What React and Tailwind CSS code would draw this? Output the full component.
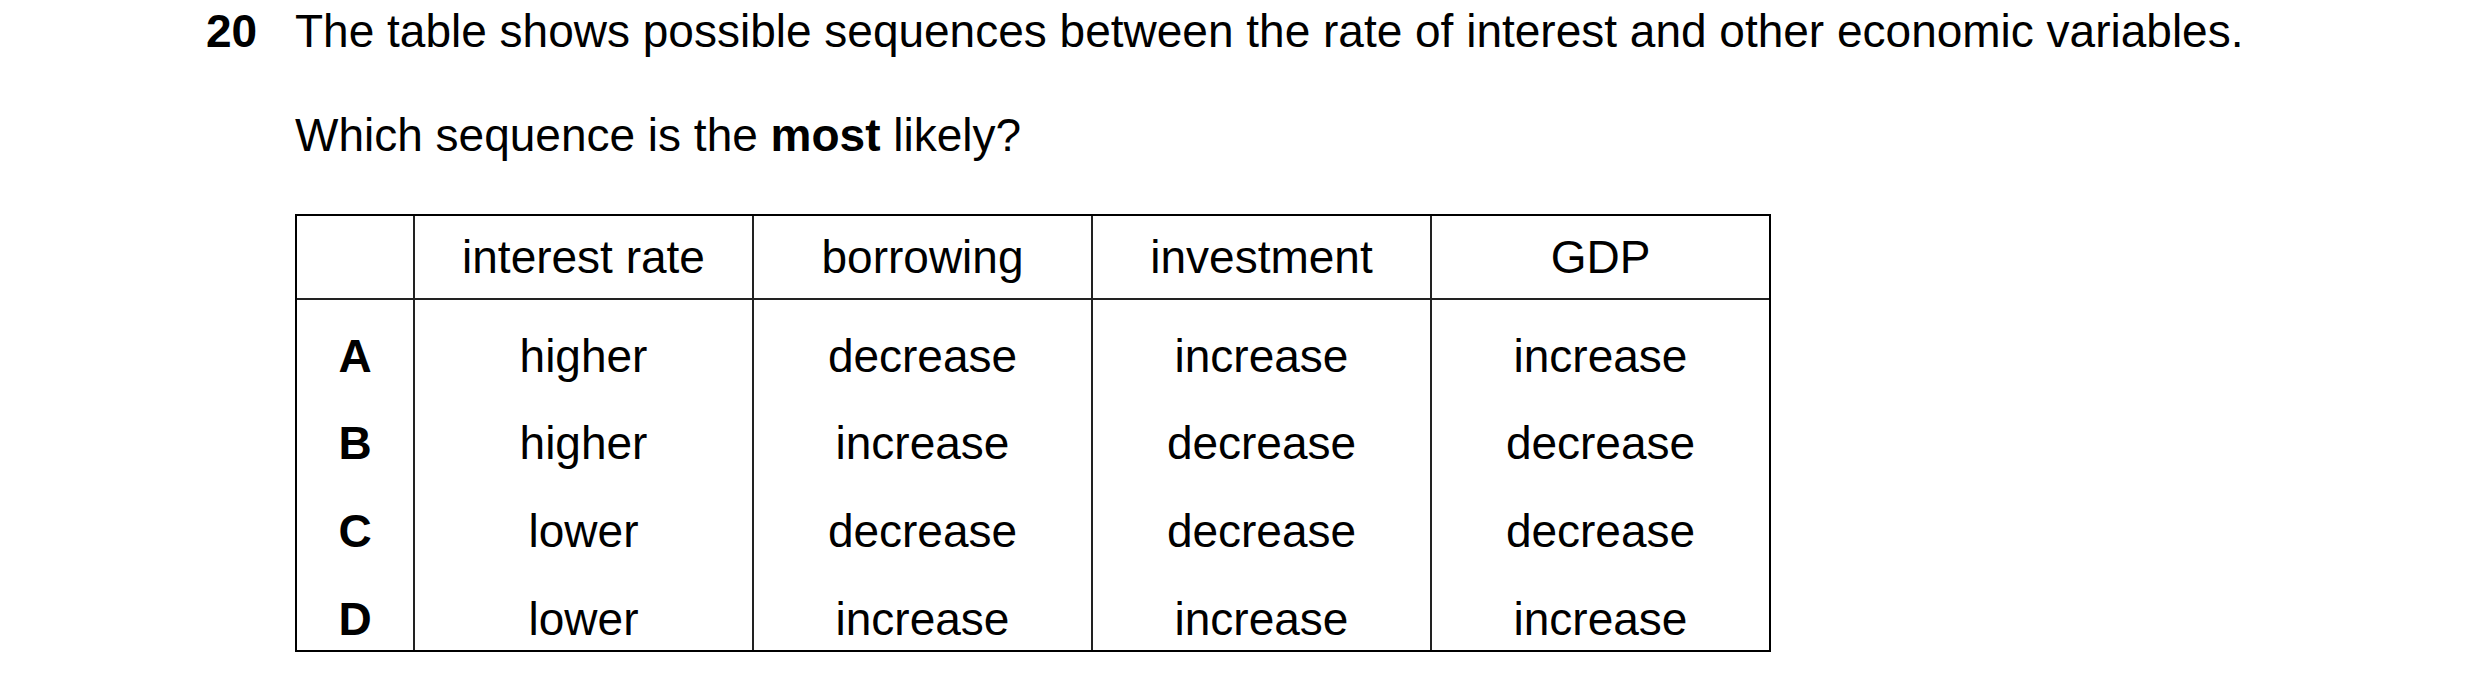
import React from "react";

const headers = ["interest rate", "borrowing", "investment", "GDP"];

const rows = [
  { key: "A", cells: ["higher", "decrease", "increase", "increase"], pad: "pt-[33px] pb-[21px]" },
  { key: "B", cells: ["higher", "increase", "decrease", "decrease"], pad: "pt-[20px] pb-[21px]" },
  { key: "C", cells: ["lower", "decrease", "decrease", "decrease"], pad: "pt-[21px] pb-[21px]" },
  { key: "D", cells: ["lower", "increase", "increase", "increase"], pad: "pt-[21px] pb-[8px]" },
];

const App = () => {
  return (
    <div
      className="w-[2480px] h-[692px] bg-white text-black pt-[8px] pl-[206px] flex text-[46px] leading-none"
      style={{ fontFamily: '"Liberation Sans", Arial, sans-serif' }}
    >
      <div className="w-[89px] font-bold">20</div>
      <div className="flex flex-col">
        <p className="h-[46px] whitespace-nowrap">
          The table shows possible sequences between the rate of interest and other economic variables.
        </p>
        <p className="h-[46px] mt-[58px] whitespace-nowrap">
          Which sequence is the <span className="font-bold">most</span> likely?
        </p>
        <div className="mt-[56px] w-[1476px] border-2 border-black">
          <div className="grid grid-cols-[116px_repeat(4,339px)] border-b-2 border-[#222]">
            <div className="h-[82px]" />
            {headers.map((h) => (
              <div key={h} className="h-[82px] border-l-2 border-[#222] flex items-center justify-center">
                {h}
              </div>
            ))}
          </div>
          {rows.map((r) => (
            <div key={r.key} className="grid grid-cols-[116px_repeat(4,339px)]">
              <div className={`${r.pad} text-center font-bold`}>{r.key}</div>
              {r.cells.map((c, i) => (
                <div key={i} className={`${r.pad} border-l-2 border-[#222] text-center`}>
                  {c}
                </div>
              ))}
            </div>
          ))}
        </div>
      </div>
    </div>
  );
};

export default App;
